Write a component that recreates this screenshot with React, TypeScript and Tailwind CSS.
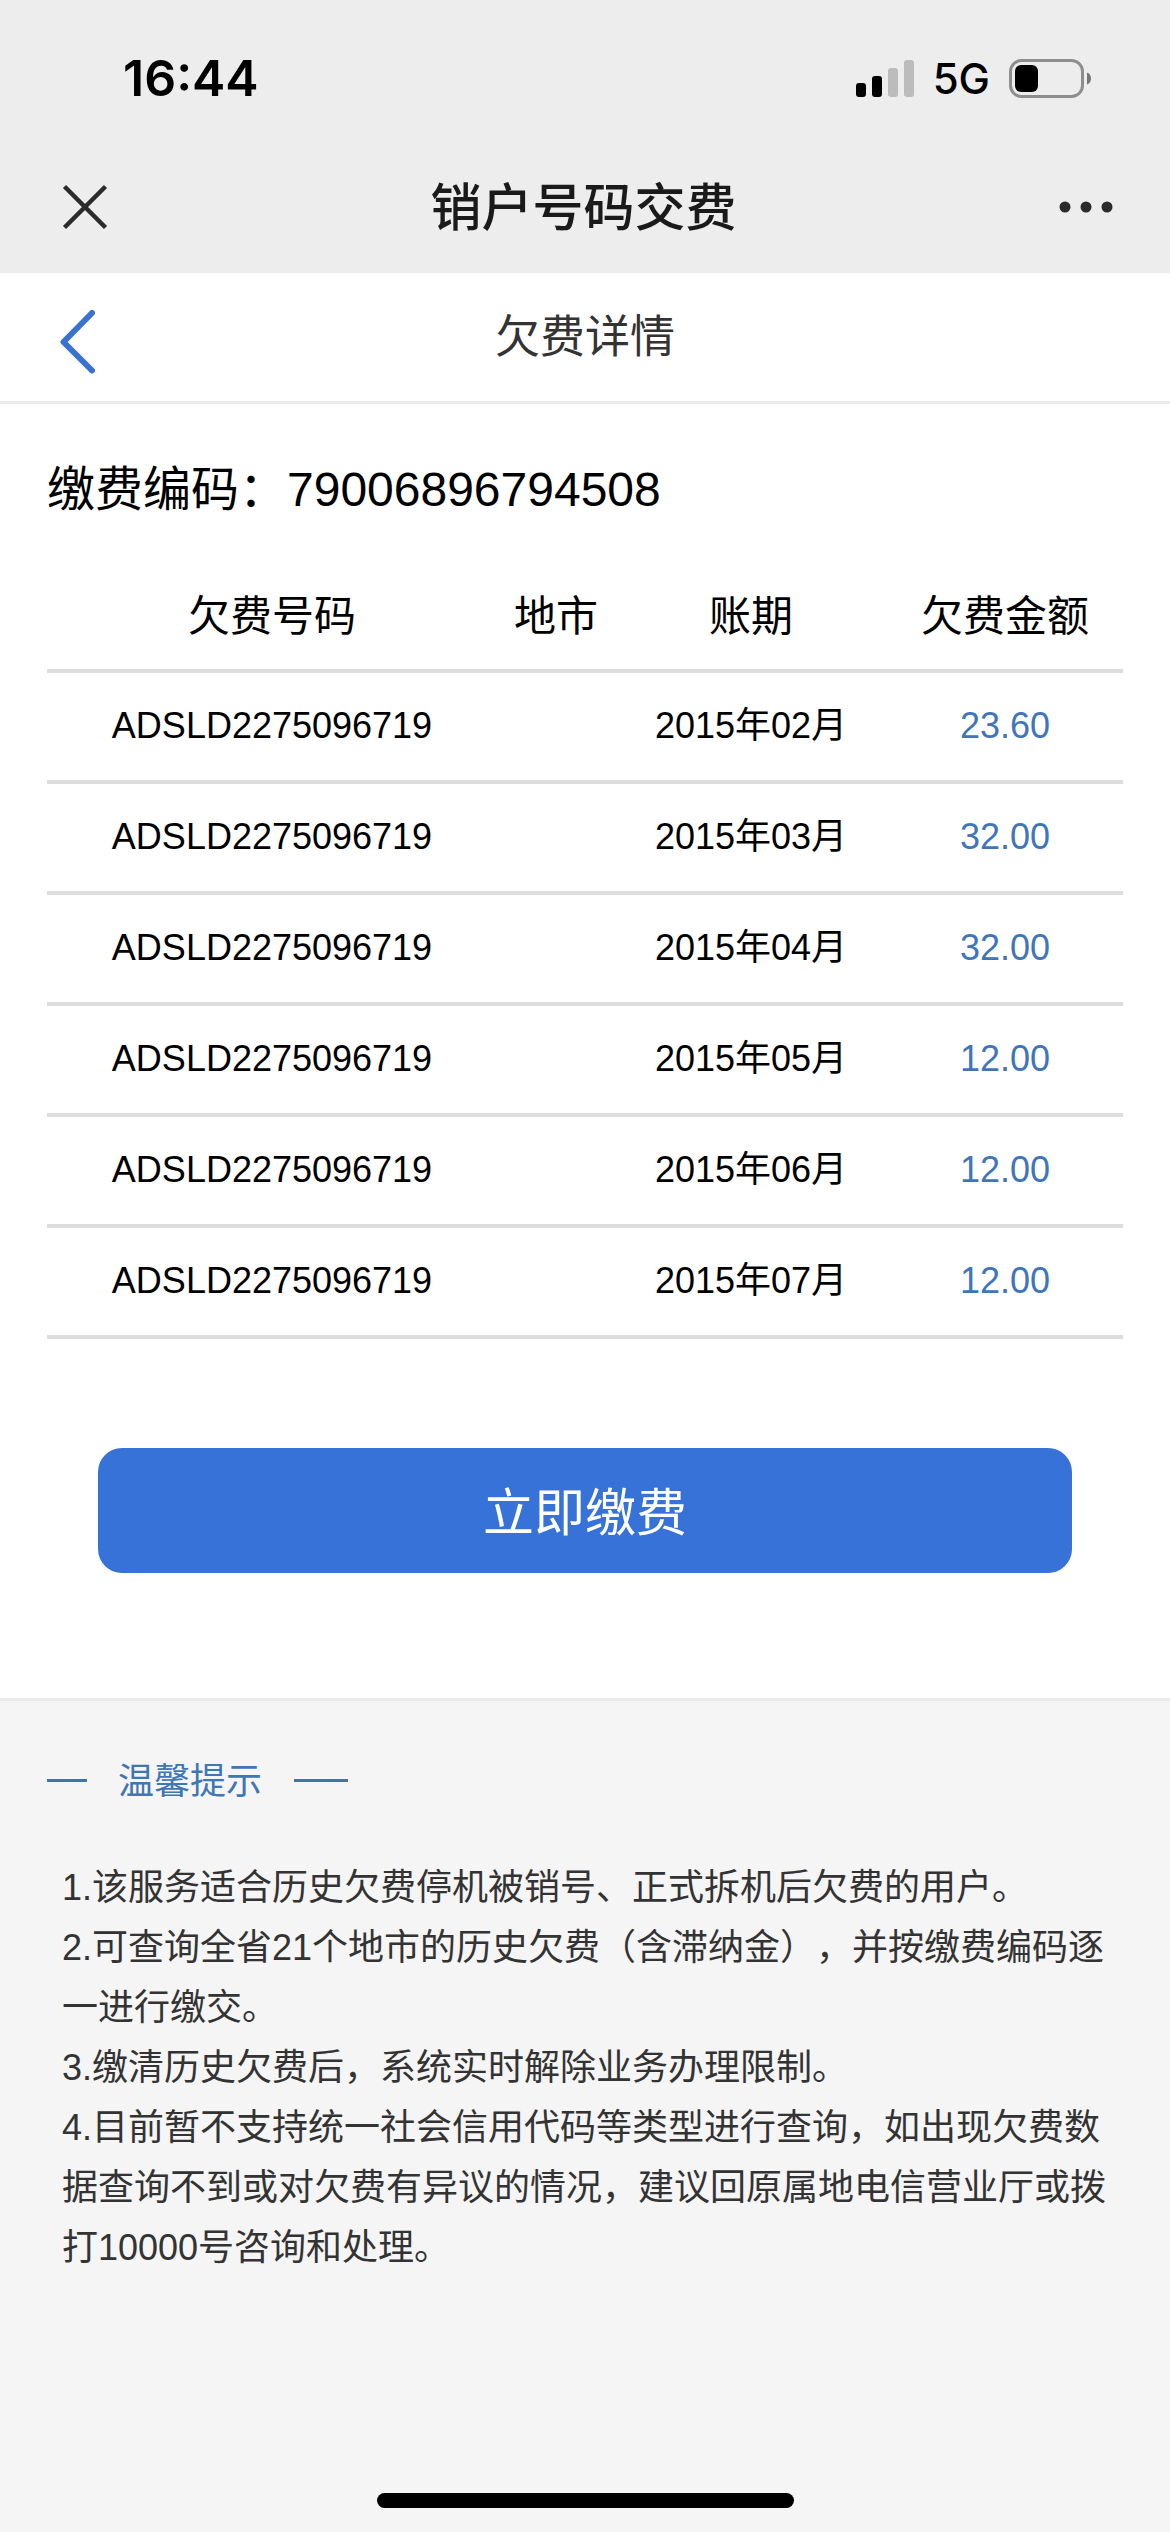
interface Bill {
  account: string
  city: string
  period: string
  amount: string
}

const ACCOUNT = 'ADSLD2275096719'

const bills: Bill[] = [
  { account: ACCOUNT, city: '', period: '2015年02月', amount: '23.60' },
  { account: ACCOUNT, city: '', period: '2015年03月', amount: '32.00' },
  { account: ACCOUNT, city: '', period: '2015年04月', amount: '32.00' },
  { account: ACCOUNT, city: '', period: '2015年05月', amount: '12.00' },
  { account: ACCOUNT, city: '', period: '2015年06月', amount: '12.00' },
  { account: ACCOUNT, city: '', period: '2015年07月', amount: '12.00' },
]

const tips = [
  '1.该服务适合历史欠费停机被销号、正式拆机后欠费的用户。',
  '2.可查询全省21个地市的历史欠费（含滞纳金），并按缴费编码逐一进行缴交。',
  '3.缴清历史欠费后，系统实时解除业务办理限制。',
  '4.目前暂不支持统一社会信用代码等类型进行查询，如出现欠费数据查询不到或对欠费有异议的情况，建议回原属地电信营业厅或拨打10000号咨询和处理。',
]

function StatusBar() {
  return (
    <div className="flex h-[140px] items-start justify-between pt-[48px] pr-[78px] pl-[123px] font-['Inter',sans-serif] text-black">
      <span className="text-[50px] leading-[60px] font-semibold">16:44</span>
      <div className="flex h-[60px] items-center">
        <svg width="58" height="37" viewBox="0 0 58 37" className="mr-[19px]">
          <rect x="0" y="23" width="10" height="14" rx="3" fill="#000" />
          <rect x="16" y="16" width="10" height="21" rx="3" fill="#000" />
          <rect x="32" y="8" width="10" height="29" rx="3" fill="#bcbcbc" />
          <rect x="48" y="0" width="10" height="37" rx="3" fill="#bcbcbc" />
        </svg>
        <span className="mr-[19px] pt-[2px] text-[42px] leading-[60px] font-medium">5G</span>
        <svg width="83" height="39" viewBox="0 0 83 39">
          <rect x="1.5" y="1.5" width="72" height="36" rx="11" fill="none" stroke="#8e8e8e" strokeWidth="3" />
          <rect x="6" y="6" width="23" height="27" rx="6" fill="#000" />
          <path d="M78 13.5c3 1 4 3.500 4 6s-1 5-4 6z" fill="#777" />
        </svg>
      </div>
    </div>
  )
}

function TitleBar() {
  return (
    <div className="flex h-[133px] items-center justify-between pr-[57px] pl-[62px]">
      <svg width="46" height="46" viewBox="0 0 46 46" stroke="#2b2b2b" strokeWidth="4.5">
        <path d="M2.500 2.500l41 41M43.500 2.500l-41 41" />
      </svg>
      <h1 className="pt-[4px] text-[51px] leading-[60px] font-medium text-[#1a1a1a]">销户号码交费</h1>
      <svg width="54" height="12" viewBox="0 0 54 12" fill="#2b2b2b">
        <circle cx="6" cy="6" r="5.500" />
        <circle cx="27" cy="6" r="5.500" />
        <circle cx="48" cy="6" r="5.500" />
      </svg>
    </div>
  )
}

function PageHeader() {
  return (
    <div className="grid h-[131px] grid-cols-[1fr_auto_1fr] border-b-[3px] border-[#ebebeb] bg-white">
      <svg width="36" height="64" viewBox="0 0 36 64" fill="none" stroke="#3a73cf" strokeWidth="6" className="mt-[37px] ml-[59px]">
        <path d="M33 3L4.500 32L33 60.500" strokeLinecap="round" strokeLinejoin="round" />
      </svg>
      <h2 className="pt-[35px] text-[45px] leading-[60px] text-[#333]">欠费详情</h2>
    </div>
  )
}

function BillTable() {
  return (
    <table className="w-full table-fixed border-collapse text-center text-[36px] text-black">
      <colgroup>
        <col className="w-[450px]" />
        <col className="w-[118px]" />
        <col className="w-[272px]" />
        <col className="w-[236px]" />
      </colgroup>
      <thead>
        <tr className="h-[111px] border-b-4 border-[#ddd] text-[42px]">
          <th className="p-0 pt-[4px] font-normal">欠费号码</th>
          <th className="p-0 pt-[4px] font-normal">地市</th>
          <th className="p-0 pt-[4px] font-normal">账期</th>
          <th className="p-0 pt-[4px] font-normal">欠费金额</th>
        </tr>
      </thead>
      <tbody>
        {bills.map((bill) => (
          <tr key={bill.period} className="h-[111px] border-b-4 border-[#ddd]">
            <td className="p-0 pb-[2px]">{bill.account}</td>
            <td className="p-0 pb-[2px]">{bill.city}</td>
            <td className="p-0 pb-[2px]">{bill.period}</td>
            <td className="p-0 pb-[2px] text-[#3f76bb]">{bill.amount}</td>
          </tr>
        ))}
      </tbody>
    </table>
  )
}

export default function App() {
  return (
    <div className="flex h-[2532px] w-[1170px] flex-col bg-[#f5f5f5] font-['Liberation_Sans','Noto_Sans_CJK_SC',sans-serif]">
      <header className="bg-[#ededed]">
        <StatusBar />
        <TitleBar />
      </header>
      <PageHeader />

      <main className="h-[1297px] border-b-[3px] border-[#ebebeb] bg-white px-[47px] pt-[56px]">
        <p className="mb-[40px] text-[48px] leading-[60px] text-black">缴费编码：79006896794508</p>
        <BillTable />
        <button className="mx-[51px] mt-[109px] h-[125px] w-[974px] rounded-[24px] bg-[#3672d7] pt-[7px] text-[51px] text-white">
          立即缴费
        </button>
      </main>

      <section className="px-[47px] pt-[49px]">
        <div className="flex items-center text-[#3f76b5]">
          <span className="h-[3px] w-[40px] bg-[#3f76a8]" />
          <h3 className="mr-[32px] ml-[31px] h-[60px] pt-[2px] text-[36px] leading-[60px]">温馨提示</h3>
          <span className="h-[3px] w-[54px] bg-[#3f76a8]" />
        </div>
        <div className="mt-[48px] ml-[15px] w-[1050px] text-[36px] leading-[60px] text-[#333] [text-spacing-trim:space-all]">
          {tips.map((tip) => (
            <p key={tip}>{tip}</p>
          ))}
        </div>
      </section>

      <div className="mx-auto mt-auto mb-[24px] h-[15px] w-[417px] rounded-full bg-black" />
    </div>
  )
}
